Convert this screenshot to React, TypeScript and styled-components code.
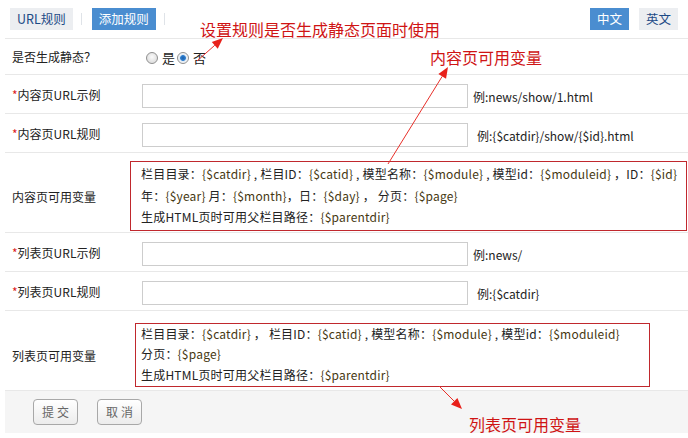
import React from "react";
import styled, { createGlobalStyle } from "styled-components";

const Global = createGlobalStyle`
  html, body { margin: 0; padding: 0; background: #fff; }
  body { font-family: "Noto Sans CJK SC", "Liberation Sans", sans-serif; font-size: 12px; color: #222; }
`;

const Page = styled.div`
  position: relative;
  width: 688px;
  height: 438px;
  overflow: hidden;
`;

const Header = styled.div`
  display: flex;
  align-items: center;
  height: 39px;
  box-sizing: border-box;
  padding: 8px 10px 9px 5px;
  margin-left: 5px;
  border-bottom: 1px solid #e8e8e8;
`;

const Tab = styled.div<{ $active?: boolean }>`
  height: 22px;
  line-height: 22px;
  padding: 0 7px;
  font-size: 12.5px;
  background: ${(p) => (p.$active ? "#4a8dd0" : "#eceef1")};
  color: ${(p) => (p.$active ? "#fff" : "#1d4a86")};
`;

const Sep = styled.div`
  width: 1px;
  height: 12px;
  background: #dfe3e8;
  margin: 0 10px 0 8px;
`;

const Spacer = styled.div`
  flex: 1;
`;

const LangGroup = styled.div`
  display: flex;
  gap: 10px;
`;

const Form = styled.div`
  margin-left: 5px;
`;

const Row = styled.div<{ $h: number; $pt?: number }>`
  display: flex;
  align-items: center;
  height: ${(p) => p.$h}px;
  padding-top: ${(p) => p.$pt ?? 0}px;
  box-sizing: border-box;
  border-bottom: 1px solid #e8e8e8;
`;

const Label = styled.div`
  width: 137px;
  flex: none;
  padding-left: 7px;
  box-sizing: border-box;
  color: #222;
`;

const Star = styled.span`
  color: #d22;
`;

const Field = styled.div`
  display: flex;
  align-items: center;
`;

const Input = styled.div`
  width: 326px;
  height: 24px;
  box-sizing: border-box;
  border: 1px solid #cdcdcd;
  background: #fff;
  margin-top: 4px;
`;

const Hint = styled.span<{ $gap: number }>`
  margin-left: ${(p) => p.$gap}px;
  color: #222;
  margin-top: 4px;
`;

const RadioGroup = styled.div`
  display: flex;
  align-items: center;
  margin-left: 4px;
  margin-top: 2px;
`;

const Radio = styled.span<{ $checked?: boolean }>`
  display: inline-block;
  width: 12px;
  height: 12px;
  border-radius: 50%;
  box-sizing: border-box;
  border: 1px solid #8f8f8f;
  background: ${(p) =>
    p.$checked
      ? "radial-gradient(circle, #1b5fa8 0, #2f7fd0 2.5px, #dfe9f3 3.3px, #f4f6f8 5px)"
      : "radial-gradient(circle at 50% 40%, #fafafa 0, #e2e2e2 5px)"};
  margin-right: 4px;
`;

const RadioText = styled.span`
  margin-right: 2px;
  font-size: 13px;
`;

const VarBox = styled.div<{ $offset: number; $w: number; $lh: number; $pad: number }>`
  flex: none;
  margin-left: ${(p) => p.$offset}px;
  width: ${(p) => p.$w}px;
  box-sizing: border-box;
  border: 1px solid #c0282d;
  padding: ${(p) => p.$pad}px 0 ${(p) => p.$pad + 1}px ${(p) => -p.$offset - 2}px;
  line-height: ${(p) => p.$lh}px;
  letter-spacing: 0.2px;
  color: #222;
  white-space: nowrap;
`;

const V = styled.span`
  color: #463812;
`;

const Footer = styled.div`
  display: flex;
  align-items: center;
  gap: 19px;
  height: 42px;
  background: #f5f5f5;
  padding-left: 28px;
`;

const Btn = styled.div`
  width: 45px;
  height: 26px;
  box-sizing: border-box;
  border: 1px solid #a8a8a8;
  border-radius: 4px;
  background: linear-gradient(#ffffff, #ececec);
  color: #666;
  text-align: center;
  line-height: 24px;
  letter-spacing: 3px;
  padding-left: 3px;
  font-size: 12px;
`;

const Note = styled.div<{ $x: number; $y: number }>`
  position: absolute;
  left: ${(p) => p.$x}px;
  top: ${(p) => p.$y}px;
  color: #cf1414;
  font-size: 16px;
  line-height: 20px;
  white-space: nowrap;
`;

const Arrows = styled.svg`
  position: absolute;
  left: 0;
  top: 0;
  pointer-events: none;
`;

function Arrow({ x1, y1, x2, y2 }: { x1: number; y1: number; x2: number; y2: number }) {
  const a = Math.atan2(y2 - y1, x2 - x1);
  const L = 11;
  const W = 4.5;
  const bx = x2 - L * Math.cos(a);
  const by = y2 - L * Math.sin(a);
  const px = -Math.sin(a) * W;
  const py = Math.cos(a) * W;
  return (
    <g>
      <line x1={x1} y1={y1} x2={bx} y2={by} stroke="#e8302a" strokeWidth={1} />
      <polygon points={`${x2},${y2} ${bx + px},${by + py} ${bx - px},${by - py}`} fill="#e8201a" />
    </g>
  );
}

export default function App() {
  return (
    <Page>
      <Global />
      <Header>
        <Tab>URL规则</Tab>
        <Sep />
        <Tab $active>添加规则</Tab>
        <Sep />
        <Spacer />
        <LangGroup>
          <Tab $active>中文</Tab>
          <Tab>英文</Tab>
        </LangGroup>
      </Header>
      <Form>
        <Row $h={36}>
          <Label>是否生成静态？</Label>
          <RadioGroup>
            <Radio />
            <RadioText>是</RadioText>
            <Radio $checked />
            <RadioText>否</RadioText>
          </RadioGroup>
        </Row>
        <Row $h={39}>
          <Label>
            <Star>*</Star>内容页URL示例
          </Label>
          <Field>
            <Input />
            <Hint $gap={5}>例:news/show/1.html</Hint>
          </Field>
        </Row>
        <Row $h={39}>
          <Label>
            <Star>*</Star>内容页URL规则
          </Label>
          <Field>
            <Input />
            <Hint $gap={9}>例:{"{$catdir}"}/show/{"{$id}"}.html</Hint>
          </Field>
        </Row>
        <Row $h={80} $pt={7}>
          <Label>内容页可用变量</Label>
          <VarBox $offset={-12} $w={557} $lh={21.5} $pad={1}>
            <div>
              栏目目录：<V>{"{$catdir}"}</V> , 栏目ID：<V>{"{$catid}"}</V> , 模型名称：<V>{"{$module}"}</V> , 模型id：
              <V>{"{$moduleid}"}</V> ，ID：<V>{"{$id}"}</V>
            </div>
            <div>
              年：<V>{"{$year}"}</V> 月：<V>{"{$month}"}</V>，日：<V>{"{$day}"}</V> ， 分页：<V>{"{$page}"}</V>
            </div>
            <div>
              生成HTML页时可用父栏目路径：<V>{"{$parentdir}"}</V>
            </div>
          </VarBox>
        </Row>
        <Row $h={39}>
          <Label>
            <Star>*</Star>列表页URL示例
          </Label>
          <Field>
            <Input />
            <Hint $gap={5}>例:news/</Hint>
          </Field>
        </Row>
        <Row $h={39}>
          <Label>
            <Star>*</Star>列表页URL规则
          </Label>
          <Field>
            <Input />
            <Hint $gap={9}>例:{"{$catdir}"}</Hint>
          </Field>
        </Row>
        <Row $h={80} $pt={9}>
          <Label>列表页可用变量</Label>
          <VarBox $offset={-7} $w={515} $lh={20.5} $pad={0}>
            <div>
              栏目目录：<V>{"{$catdir}"}</V> ， 栏目ID：<V>{"{$catid}"}</V> , 模型名称：<V>{"{$module}"}</V> , 模型id：
              <V>{"{$moduleid}"}</V>
            </div>
            <div>
              分页：<V>{"{$page}"}</V>
            </div>
            <div>
              生成HTML页时可用父栏目路径：<V>{"{$parentdir}"}</V>
            </div>
          </VarBox>
        </Row>
        <Footer>
          <Btn>提交</Btn>
          <Btn>取消</Btn>
        </Footer>
      </Form>
      <Note $x={200} $y={19}>设置规则是否生成静态页面时使用</Note>
      <Note $x={430} $y={47}>内容页可用变量</Note>
      <Note $x={469} $y={414}>列表页可用变量</Note>
      <Arrows width={688} height={438} viewBox="0 0 688 438">
        <Arrow x1={197} y1={61} x2={223} y2={38} />
        <Arrow x1={388} y1={164} x2={448} y2={67} />
        <Arrow x1={439} y1={386} x2={462} y2={409} />
      </Arrows>
    </Page>
  );
}
